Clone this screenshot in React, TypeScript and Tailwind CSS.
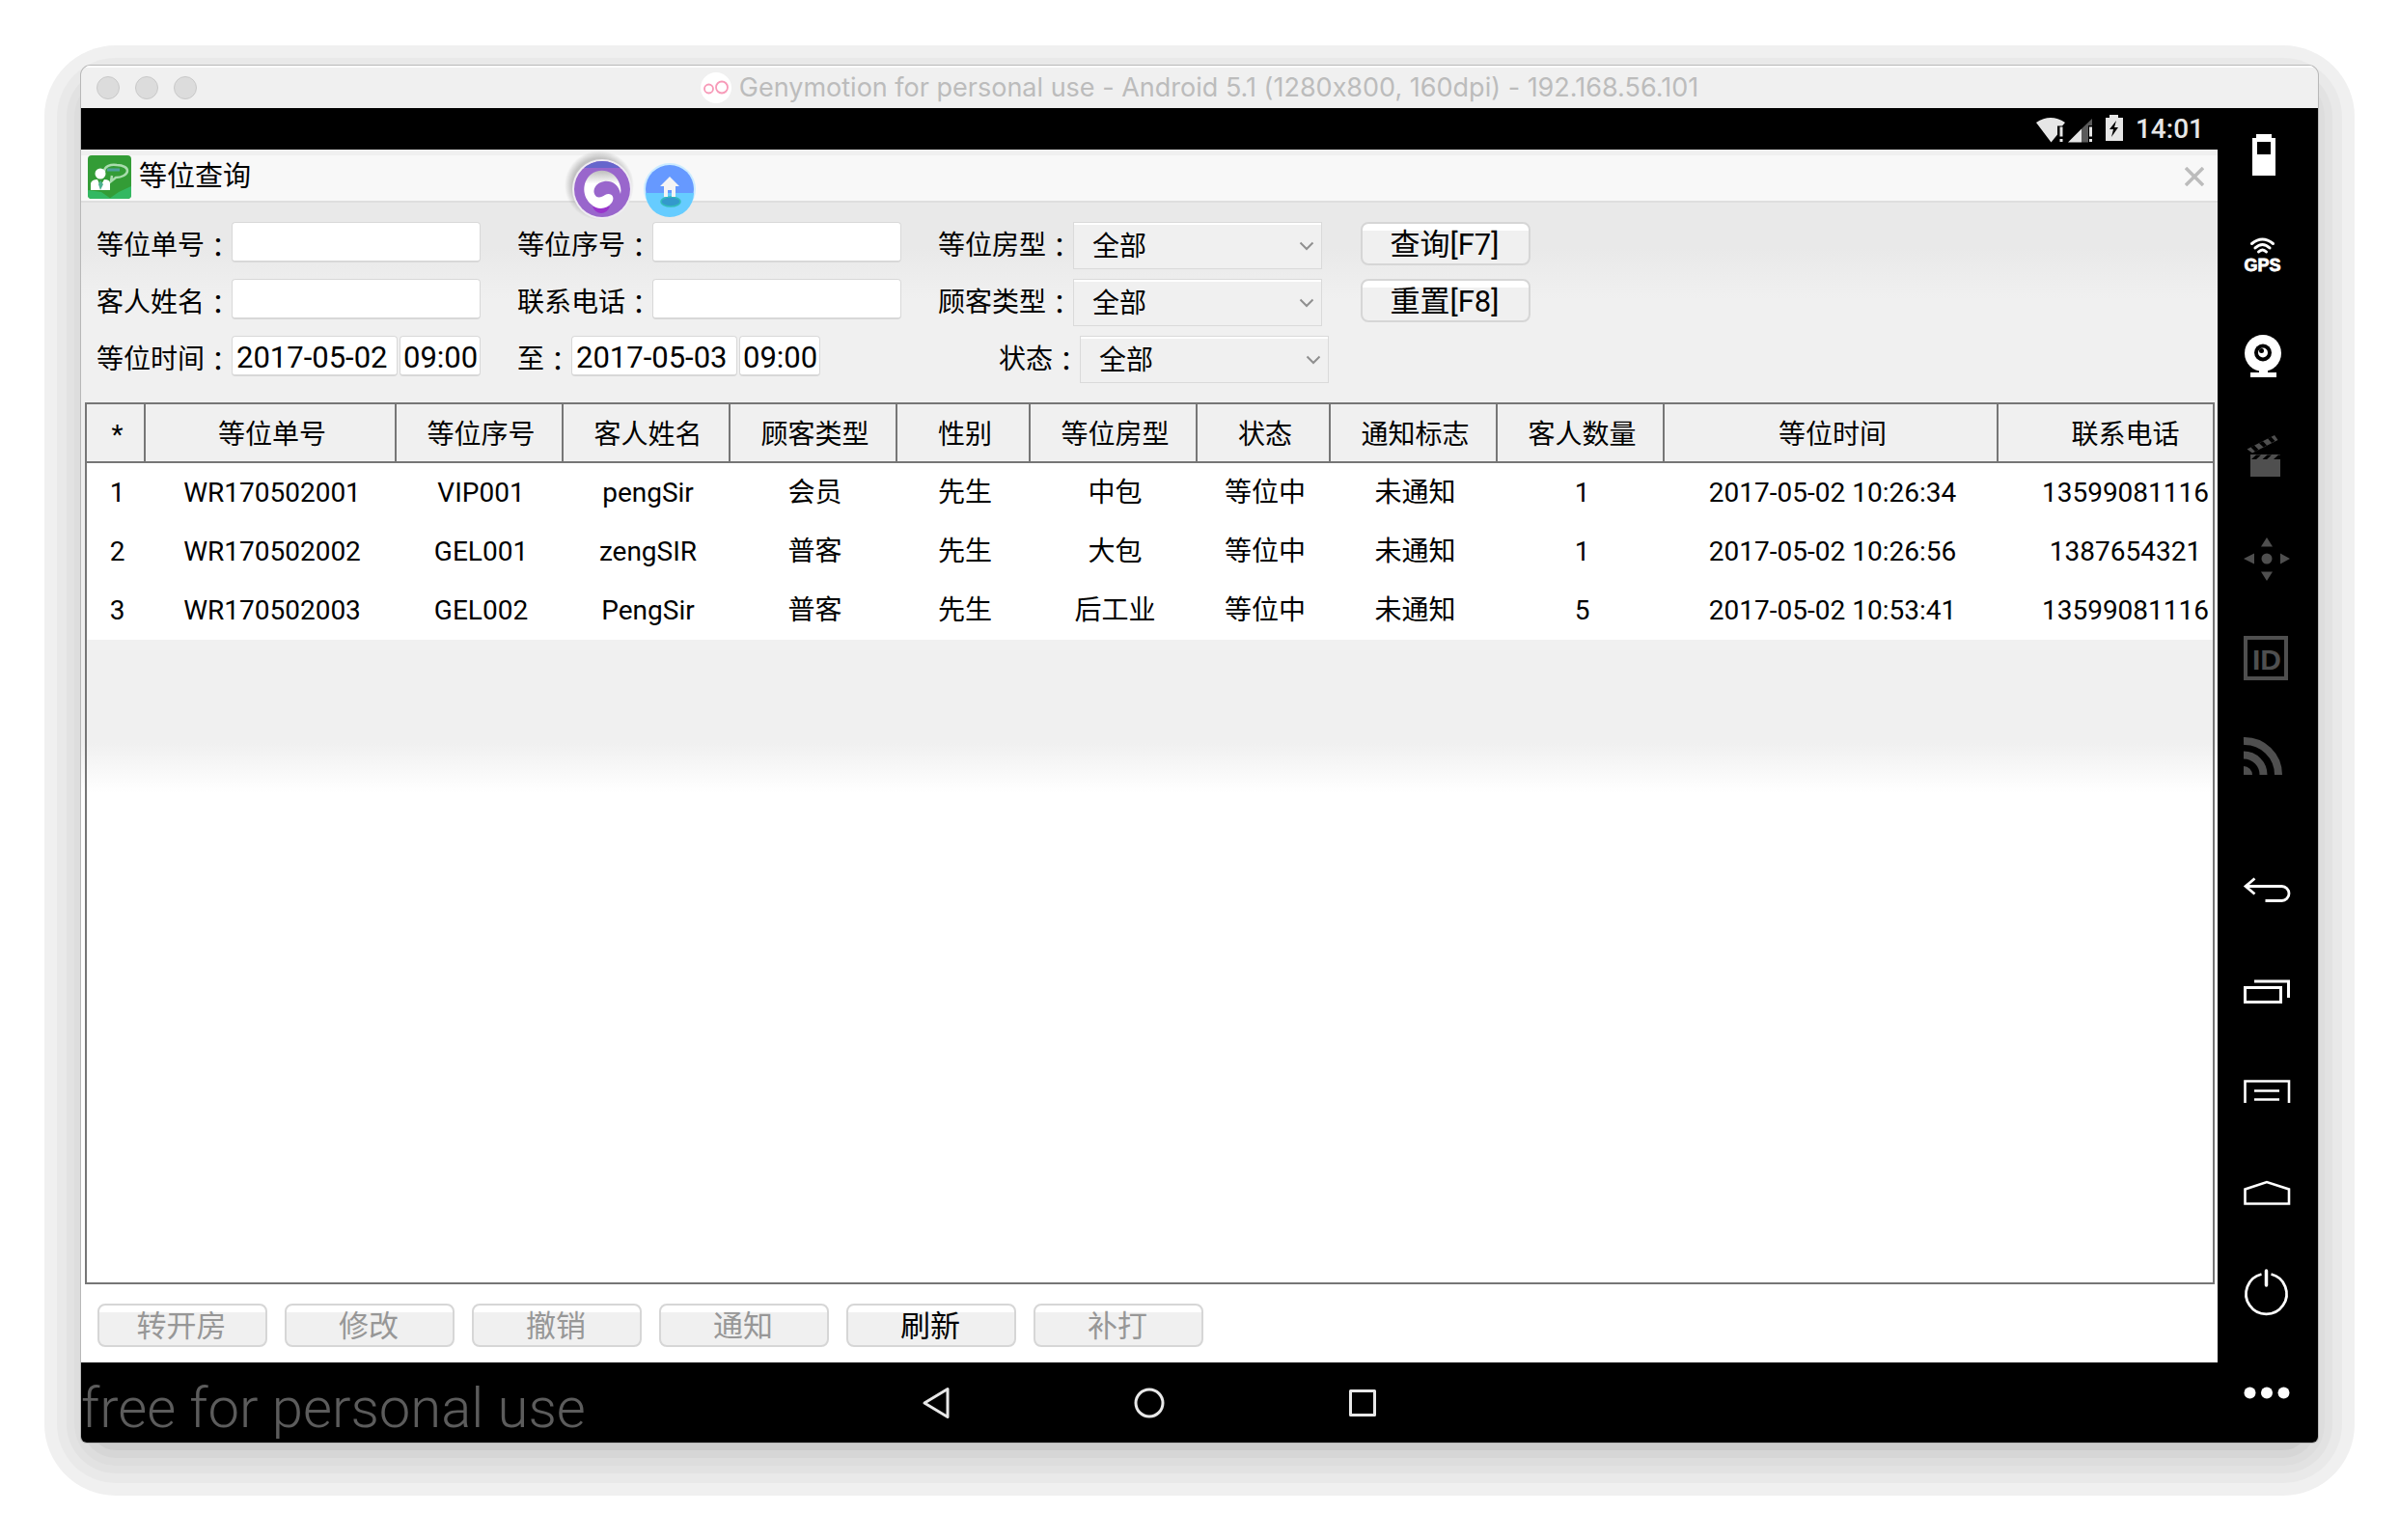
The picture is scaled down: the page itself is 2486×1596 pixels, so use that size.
import type { ReactNode } from 'react';

const columns = [
  { title: '*', width: 'w-[61px]' },
  { title: '等位单号', width: 'w-[260px]' },
  { title: '等位序号', width: 'w-[173px]' },
  { title: '客人姓名', width: 'w-[173px]' },
  { title: '顾客类型', width: 'w-[173px]' },
  { title: '性别', width: 'w-[138px]' },
  { title: '等位房型', width: 'w-[173px]' },
  { title: '状态', width: 'w-[138px]' },
  { title: '通知标志', width: 'w-[173px]' },
  { title: '客人数量', width: 'w-[173px]' },
  { title: '等位时间', width: 'w-[346px]' },
  { title: '联系电话', width: 'w-[261px]' },
];

const rows = [
  ['1', 'WR170502001', 'VIP001', 'pengSir', '会员', '先生', '中包', '等位中', '未通知', '1', '2017-05-02 10:26:34', '13599081116'],
  ['2', 'WR170502002', 'GEL001', 'zengSIR', '普客', '先生', '大包', '等位中', '未通知', '1', '2017-05-02 10:26:56', '1387654321'],
  ['3', 'WR170502003', 'GEL002', 'PengSir', '普客', '先生', '后工业', '等位中', '未通知', '5', '2017-05-02 10:53:41', '13599081116'],
];

const actions = [
  { label: '转开房', enabled: false },
  { label: '修改', enabled: false },
  { label: '撤销', enabled: false },
  { label: '通知', enabled: false },
  { label: '刷新', enabled: true },
  { label: '补打', enabled: false },
];

const inputClass =
  'h-[42px] rounded border border-[#d8d8d8] border-b-2 bg-white pt-[3px] text-[31px] leading-9 text-black outline-none';

function FieldLabel({ id, text, width = 'w-[138px]' }: { id: string; text: string; width?: string }) {
  return (
    <label htmlFor={id} className={`${width} flex h-12 shrink-0 items-center justify-end whitespace-nowrap pt-[2px] text-[28px]`}>
      {text}
      <span className="font-['Noto_Sans_CJK_TC',sans-serif]">：</span>
    </label>
  );
}

function TextField({ id, label }: { id: string; label: string }) {
  return (
    <div className="flex">
      <FieldLabel id={id} text={label} />
      <input id={id} type="text" className={`${inputClass} w-[258px] px-2`} />
    </div>
  );
}

function DateField({ id, label, date, time, width }: { id: string; label: string; date: string; time: string; width?: string }) {
  return (
    <div className="flex">
      <FieldLabel id={id} text={label} width={width} />
      <div className="flex gap-[2px]">
        <input id={id} type="text" defaultValue={date} className={`${inputClass} w-[172px] px-1`} />
        <input type="text" aria-label={`${label} 时刻`} defaultValue={time} className={`${inputClass} w-[84px] px-[3px]`} />
      </div>
    </div>
  );
}

function SelectField({ id, label, width }: { id: string; label: string; width?: string }) {
  return (
    <div className="flex">
      <FieldLabel id={id} text={label} width={width} />
      <div className="relative">
        <select
          id={id}
          className="h-[49px] w-[258px] appearance-none border border-[#dadada] bg-[linear-gradient(#fff_2px,#f0f0f0_2px)] pl-[19px] pt-[2px] text-[28px] leading-[44px] text-black outline-none"
        >
          <option>全部</option>
        </select>
        <svg className="pointer-events-none absolute right-2 top-5 h-[10px] w-4" viewBox="0 0 16 10" fill="none" stroke="#8f8f8f" strokeWidth="2">
          <path d="M1.5 1.5 8 8l6.500-6.500" />
        </svg>
      </div>
    </div>
  );
}

function PushButton({ children, disabled }: { children: ReactNode; disabled?: boolean }) {
  return (
    <button
      type="button"
      disabled={disabled}
      className="h-[45px] w-[176px] rounded-lg border-2 border-[#d6d6d6] bg-[linear-gradient(#fff_7px,#f0f0f0_7px)] pr-[2px] pt-[2px] text-[31px] leading-9 text-black disabled:text-[#979797]"
    >
      {children}
    </button>
  );
}

function SideButton({ label, disabled, children }: { label: string; disabled?: boolean; children: ReactNode }) {
  return (
    <button type="button" aria-label={label} className={`flex h-24 w-full items-center justify-center ${disabled ? 'text-[#4f4f4f]' : 'text-white'}`}>
      <svg className="h-12 w-12 overflow-visible" viewBox="0 0 48 48" fill="none" stroke="none">
        {children}
      </svg>
    </button>
  );
}

function Sidebar() {
  return (
    <aside className="flex w-[104px] shrink-0 flex-col justify-between bg-black pb-[5px]">
      <div className="flex flex-col gap-2">
        <SideButton label="Battery">
          <path fill="currentColor" fillRule="evenodd" d="M12 3h16v4h4v39H8V7h4zM13 11v13h14V11z" />
        </SideButton>
        <SideButton label="GPS">
          <g stroke="currentColor" strokeWidth="3" strokeLinecap="round">
            <path d="M7.500 12.500Q18.500 3.500 29.500 12.500" />
            <path d="M11 17Q18.500 10 26 17" />
            <path d="M14.500 21Q18.500 17 22.500 21" />
          </g>
          <text x="18.500" y="41" textAnchor="middle" fill="currentColor" stroke="currentColor" strokeWidth="0.8" className="font-['Liberation_Sans',sans-serif] text-[18px] font-bold">
            GPS
          </text>
        </SideButton>
        <SideButton label="Camera">
          <path fill="currentColor" d="M6 42h9v-3h9v3h9v5H6z" />
          <circle cx="19" cy="22" r="19" fill="currentColor" />
          <circle cx="19" cy="21.500" r="9" fill="#000" />
          <circle cx="19" cy="21.500" r="5" fill="currentColor" />
          <circle cx="17.500" cy="19.500" r="2.500" fill="#000" />
        </SideButton>
        <SideButton label="Capture" disabled>
          <path fill="currentColor" d="M6 23h31v23H6zM2.500 17.500 31 3l3.500 5L8 21.500z" />
          <path fill="#000" d="m7 28 5-4.500h5L12 28zM18.500 28l5-4.500h4.500L23 28zM30 28l5-4.500h2V28zM6.500 15.500l3.500-2 4.500 4.500-3.500 2zM15 11.200l4-2 4 4.300-3.500 2zM24 6.600l3.500-1.800 4 4.300-3.500 1.900z" />
        </SideButton>
        <SideButton label="Pixel perfect" disabled>
          <path fill="currentColor" d="M23 5l6 9.500H17zM23 50l6-9.500H17zM-1 27l11-5.500v11zM47 27l-10-5.500v11z" />
          <circle cx="23" cy="27" r="5.500" fill="currentColor" />
        </SideButton>
        <SideButton label="Identifiers" disabled>
          <rect x="1" y="5" width="42" height="42" stroke="currentColor" strokeWidth="4" />
          <text x="23" y="38" textAnchor="middle" fill="currentColor" className="font-['Liberation_Sans',sans-serif] text-[30px] font-bold">
            ID
          </text>
        </SideButton>
        <SideButton label="Network" disabled>
          <path stroke="currentColor" strokeWidth="8" d="M-1 8a35 35 0 0 1 36 35M-1 22.500a20.500 20.500 0 0 1 20.500 20.500" />
          <path fill="currentColor" d="M-1 34a9 9 0 0 1 9 9h-9z" />
        </SideButton>
      </div>
      <div className="flex flex-col gap-2">
        <SideButton label="Back">
          <g stroke="currentColor" strokeWidth="2.800">
            <path d="M1 20.500h37.500a7.500 7.500 0 0 1 0 15H21.500" />
            <path d="M10.500 12.500 1 20.500l9.500 8" />
          </g>
        </SideButton>
        <SideButton label="Recent apps">
          <path stroke="currentColor" strokeWidth="3" d="M.5 21.500h37v15H.5zM10 15h35.500v17" />
        </SideButton>
        <SideButton label="Menu">
          <path stroke="currentColor" strokeWidth="2.600" d="M.5 37V14.500H46V37M10 24.500h26M10 33.500h26" />
        </SideButton>
        <SideButton label="Home">
          <path stroke="currentColor" strokeWidth="2.600" d="M.5 37.500V22.500L23 15l23 7.500v15z" />
        </SideButton>
        <SideButton label="Power">
          <path stroke="currentColor" strokeWidth="2.800" d="M17.500 6.500a21 21 0 1 0 10 0" />
          <path stroke="currentColor" strokeWidth="3.500" strokeLinecap="round" d="M22.500 3v15" />
        </SideButton>
        <SideButton label="More">
          <g fill="currentColor">
            <circle cx="5.500" cy="25.500" r="6" />
            <circle cx="23" cy="25.500" r="6" />
            <circle cx="40.500" cy="25.500" r="6" />
          </g>
        </SideButton>
      </div>
    </aside>
  );
}

function StatusBar() {
  return (
    <div className="flex h-[43px] items-center justify-end bg-black pr-[14px] text-[#e6e6e6]">
      <svg className="h-8 w-[92px]" viewBox="0 0 92 32" fill="currentColor">
        <path d="M1 9Q16-1 31 9l-3 3.500h-5v9l-6.500 8z" />
        <path d="M25.500 13.500h3v10h-3zM25.500 26h3v3h-3z" />
        <path d="M34 29.500 48 15.500v14z" />
        <path fill="#5a5a5a" d="M48 15.500 59 5V12h-4v17.500h-7z" />
        <path d="M56 13.500h3v10h-3zM56 26h3v3h-3z" />
        <path fillRule="evenodd" d="M77 1h9v3h5v24H73V4h4zM84 7l-7 9h4l-2 8 7-10h-4z" />
      </svg>
      <span className="ml-3 text-[28px] font-medium leading-8">14:01</span>
    </div>
  );
}

function AppIcon() {
  return (
    <svg className="h-[45px] w-[45px]" viewBox="0 0 45 45">
      <rect width="45" height="45" rx="4" fill="#339c36" />
      <path d="M0 36 14 38 24 45H4a4 4 0 0 1-4-4zM45 32v9a4 4 0 0 1-4 4H22l10-7z" fill="#33b862" />
      <path d="M17 17c0-6 7-8 13-7 7 0 11 3 11 6 0 4-6 7-12 7l-5 4 1-6" fill="none" stroke="#a9dcae" strokeWidth="2.500" />
      <path d="M20 15h13" stroke="#4e9f9b" strokeWidth="3" />
      <circle cx="13" cy="19" r="5.500" fill="#fff" />
      <path d="M3 36V29q1-4 7-4l3 7 4-7q6 0 6 4v7z" fill="#fff" />
      <path d="m13 26 3 4-3 6-2-6z" fill="#4cb08f" />
    </svg>
  );
}

function FloatingBalls() {
  return (
    <div className="absolute left-[504px] top-[3px] flex items-center">
      <button type="button" aria-label="助手">
        <svg className="h-[76px] w-[72px] overflow-visible" viewBox="0 0 72 76">
          <defs>
            <radialGradient id="halo">
              <stop offset="0.780" stopColor="#8d8d8d" stopOpacity="0.500" />
              <stop offset="1" stopColor="#8d8d8d" stopOpacity="0" />
            </radialGradient>
            <linearGradient id="swirl" x1="0" y1="0" x2="0" y2="1">
              <stop offset="0" stopColor="#bdbdbd" />
              <stop offset="0.350" stopColor="#fff" />
              <stop offset="1" stopColor="#fff" />
            </linearGradient>
            <clipPath id="ball">
              <circle cx="36" cy="38" r="29" />
            </clipPath>
          </defs>
          <circle cx="33" cy="34" r="36" fill="url(#halo)" />
          <circle cx="36" cy="38" r="31" fill="#efecf2" />
          <circle cx="36" cy="38" r="29" fill="#9966cc" />
          <path clipPath="url(#ball)" fill="#6666cc" d="M10 8h52v8H10z" />
          <path d="M26 56h18q-3 7-9 7t-9-7z" fill="#9933cc" />
          <path d="M55 43C53 33 46 29 38 30c-8 1-12 8-10 13 2 5 7 4 11 1 6-3 11 2 7 8-5 7-15 8-21 2C15 46 15 31 24 23c10-8 24-4 29 7 2 4 3 9 2 13z" fill="url(#swirl)" />
        </svg>
      </button>
      <button type="button" aria-label="主页" className="ml-1">
        <svg className="h-[60px] w-[60px]" viewBox="0 0 60 60">
          <circle cx="30" cy="30" r="27" fill="#ccecff" />
          <circle cx="30" cy="30" r="25" fill="#6699ff" />
          <path d="M5 34h50a25 25 0 0 1-50 0z" fill="#66ccff" />
          <ellipse cx="31" cy="43" rx="10" ry="5" fill="#3399cc" stroke="#33bbbb" strokeWidth="1.500" />
          <path d="m30 17 10 10h-4v11h-4v-7h-4v7h-4V27h-4z" fill="#f4f4f4" />
        </svg>
      </button>
    </div>
  );
}

function QueryForm() {
  return (
    <form className="grid grid-cols-[396px_396px_396px_auto] justify-start gap-x-10 gap-y-[10px] pl-[18px] pt-5">
      <TextField id="orderNo" label="等位单号" />
      <TextField id="serialNo" label="等位序号" />
      <SelectField id="roomType" label="等位房型" />
      <PushButton>查询[F7]</PushButton>

      <TextField id="guestName" label="客人姓名" />
      <TextField id="phone" label="联系电话" />
      <SelectField id="guestType" label="顾客类型" />
      <PushButton>重置[F8]</PushButton>

      <DateField id="from" label="等位时间" date="2017-05-02" time="09:00" />
      <DateField id="to" label="至" date="2017-05-03" time="09:00" width="w-[54px]" />
      <SelectField id="status" label="状态" width="w-[145px]" />
    </form>
  );
}

function WaitingTable() {
  return (
    <div className="ml-1 mr-[3px] mt-5 flex-1 overflow-hidden border-2 border-[#767676]">
      <table className="w-[2242px] table-fixed border-separate border-spacing-0 text-center text-[28px] leading-8">
        <thead>
          <tr className="h-[61px] bg-[#f0f0f0]">
            {columns.map((col) => (
              <th key={col.title} className={`${col.width} whitespace-nowrap border-b-2 border-r-2 border-[#767676] p-0 pl-1 pt-1 font-normal`}>
                {col.title}
              </th>
            ))}
          </tr>
        </thead>
        <tbody>
          {rows.map((row) => (
            <tr key={row[0]} className="h-[61px] bg-white">
              {row.map((cell, i) => (
                <td key={i} className="whitespace-nowrap p-0 pl-[2px]">{cell}</td>
              ))}
            </tr>
          ))}
        </tbody>
      </table>
    </div>
  );
}

function NavBar() {
  return (
    <nav className="grid h-[83px] grid-cols-[1fr_auto_1fr] items-center bg-black">
      <span className="whitespace-nowrap pt-[10px] text-[58px] font-light leading-[72px] text-[#5c5c5c]">free for personal use</span>
      <div className="flex">
        <button type="button" aria-label="返回" className="flex w-[221px] justify-center">
          <svg className="h-9 w-9" viewBox="0 0 36 36" fill="none" stroke="#e8e8e8" strokeWidth="3" strokeLinejoin="round">
            <path d="M30 3.500v29L6 18z" />
          </svg>
        </button>
        <button type="button" aria-label="主屏幕" className="flex w-[221px] justify-center">
          <svg className="h-9 w-9" viewBox="0 0 36 36" fill="none" stroke="#e8e8e8" strokeWidth="3">
            <circle cx="18" cy="18" r="14" />
          </svg>
        </button>
        <button type="button" aria-label="最近任务" className="flex w-[221px] justify-center">
          <svg className="h-9 w-9" viewBox="0 0 36 36" fill="none" stroke="#e8e8e8" strokeWidth="3" strokeLinejoin="round">
            <path d="M5.500 5.500h25v25h-25z" />
          </svg>
        </button>
      </div>
    </nav>
  );
}

export default function App() {
  return (
    <div className="flex min-h-screen flex-col bg-white px-[84px] pb-[101px] pt-[68px] font-[Roboto,'Noto_Sans_CJK_SC',sans-serif] text-black">
      <div className="flex flex-1 flex-col rounded-[36px] shadow-[0_17px_0_-9px_#cccccc,0_17px_0_-1px_#d6d6d6,0_17px_0_7px_#dddddd,0_17px_0_15px_#e2e2e2,0_17px_0_25px_#e9e9e9,0_17px_0_38px_#f0f0f0]">
        <div className="flex flex-1 flex-col overflow-hidden rounded-b-md rounded-t-[10px] shadow-[0_0_0_1px_#b8b8b8]">
          <header className="grid h-11 grid-cols-[1fr_auto_1fr] items-center border-t-2 border-white bg-[#f0f0f0] px-4">
            <div className="flex gap-4">
              <button type="button" aria-label="Close" className="h-6 w-6 rounded-full border border-[#c9c9c9] bg-[#dcdcdc]" />
              <button type="button" aria-label="Minimize" className="h-6 w-6 rounded-full border border-[#c9c9c9] bg-[#dcdcdc]" />
              <button type="button" aria-label="Zoom" className="h-6 w-6 rounded-full border border-[#c9c9c9] bg-[#dcdcdc]" />
            </div>
            <div className="flex items-center gap-2">
              <svg className="h-8 w-8" viewBox="0 0 32 32" fill="none" stroke="#f79ab8" strokeWidth="1.800">
                <circle cx="16" cy="16" r="16" fill="#fff" stroke="none" />
                <circle cx="8.500" cy="17" r="4.500" />
                <circle cx="22" cy="15.500" r="6" />
              </svg>
              <h1 className="whitespace-nowrap font-[Inter,sans-serif] text-[27px] leading-8 text-[#bcbcbc] [font-feature-settings:'calt'_0]">
                Genymotion for personal use - Android 5.1 (1280x800, 160dpi) - 192.168.56.101
              </h1>
            </div>
          </header>

          <div className="flex flex-1">
            <div className="flex min-w-0 flex-1 flex-col">
              <StatusBar />
              <div className="relative flex flex-1 flex-col">
                <div className="flex h-[55px] items-center border-b-2 border-[#dedede] bg-[linear-gradient(#f0f0f0_6px,#f8f8f8_6px)] pl-[7px] pr-[14px] pt-[3px]">
                  <AppIcon />
                  <h2 className="ml-2 flex-1 text-[29px] leading-10">等位查询</h2>
                  <button type="button" aria-label="关闭">
                    <svg className="h-5 w-5" viewBox="0 0 20 20" stroke="#bcbcbc" strokeWidth="3.500">
                      <path d="m1 1 18 18M19 1 1 19" />
                    </svg>
                  </button>
                </div>
                <main className="flex flex-1 flex-col bg-[linear-gradient(#e9e9e9_48px,#f0f0f0_100px,#f0f0f0_560px,#fff_612px)]">
                  <QueryForm />
                  <WaitingTable />
                  <div className="flex gap-[18px] px-[17px] pb-4 pt-5">
                    {actions.map((action) => (
                      <PushButton key={action.label} disabled={!action.enabled}>
                        {action.label}
                      </PushButton>
                    ))}
                  </div>
                </main>
                <FloatingBalls />
              </div>
              <NavBar />
            </div>
            <Sidebar />
          </div>
        </div>
      </div>
    </div>
  );
}
